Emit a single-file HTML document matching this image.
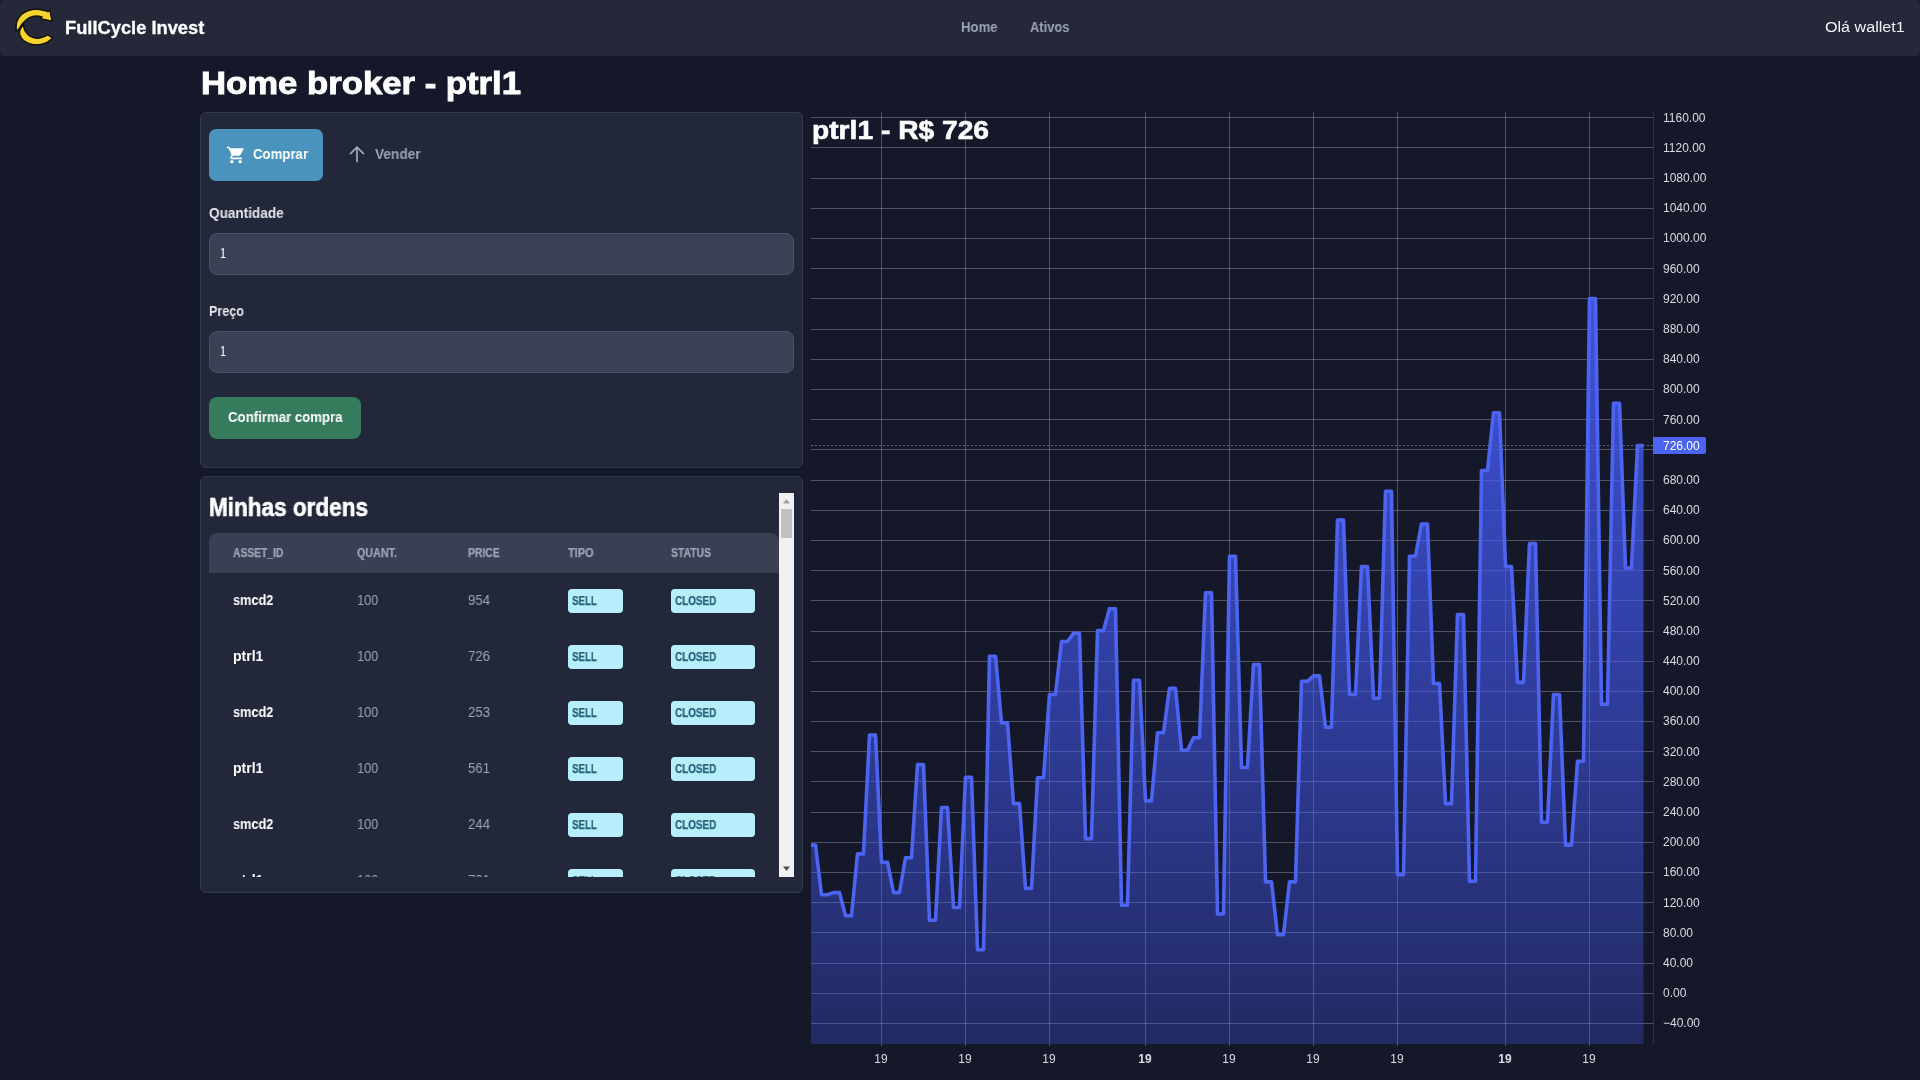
<!DOCTYPE html>
<html lang="pt-BR"><head><meta charset="utf-8"><title>Home broker - ptrl1</title>
<style>
html,body{margin:0;padding:0}body{width:1920px;height:1080px;overflow:hidden;position:relative;background:#151829;font-family:"Liberation Sans", sans-serif;color:#fff}
*{box-sizing:border-box}h1,h2,p,label,th,td,a,button{margin:0;padding:0;font-weight:inherit;font-size:inherit;font-family:inherit;text-decoration:none;border:0;background:none;cursor:default}
.abs{position:absolute}nav a,nav span,main h1,main h2,main span,main label,main button{will-change:transform}
.card{position:absolute;background:#22273a;border:1px solid #343a4e;border-radius:6px}
.inp{position:absolute;left:209px;width:585px;height:42px;background:#3b4055;border:1px solid #4b5166;border-radius:8px}
.badge{position:absolute;height:24px;border-radius:4px;background:#b7eefc}
</style></head><body>
<nav class="abs" style="left:0;top:0;width:1920px;height:56px;background:#242839;border-radius:4px">
<svg class="abs" style="left:15px;top:8px" width="39" height="39" viewBox="-1 -1 39 39"><g fill="#f7d42c" stroke="#17140a" stroke-width="1.5" stroke-linejoin="round"><path d="M7.30 15.00 C6.68 16.12 4.12 19.70 3.60 21.70 C3.08 23.70 3.35 25.23 4.20 27.00 C5.05 28.77 6.70 30.90 8.70 32.30 C10.70 33.70 13.83 34.83 16.20 35.40 C18.57 35.97 20.53 35.98 22.90 35.70 C25.27 35.42 28.10 34.78 30.40 33.70 C32.70 32.62 35.65 29.95 36.70 29.20 L31.8 25.7 C31.05 26.07 29.15 27.32 27.30 27.90 C25.45 28.48 22.92 29.35 20.70 29.20 C18.48 29.05 15.85 28.10 14.00 27.00 C12.15 25.90 10.63 24.08 9.60 22.60 C8.57 21.12 8.18 19.37 7.80 18.10 C7.42 16.83 7.38 15.52 7.30 15.00 Z"/><path d="M0.10 22.20 C0.20 20.63 -0.13 15.55 0.70 12.80 C1.53 10.05 3.25 7.55 5.10 5.70 C6.95 3.85 9.20 2.60 11.80 1.70 C14.40 0.80 17.73 0.30 20.70 0.30 C23.67 0.30 27.75 1.32 29.60 1.70 C31.45 2.08 31.43 2.45 31.80 2.60 L33.8 0.8 L36.2 12.3 L24.7 9.7 L26 7.9 C25.12 7.75 22.70 6.93 20.70 7.00 C18.70 7.07 16.23 7.18 14.00 8.30 C11.77 9.42 9.15 11.77 7.30 13.70 C5.45 15.63 4.10 18.48 2.90 19.90 C1.70 21.32 0.57 21.82 0.10 22.20 Z"/></g></svg>
<a style="position:absolute;left:65.04px;top:20.13px;font-size:17.8px;line-height:1;white-space:pre;font-weight:700;color:#fff;transform:scaleX(1.0290);transform-origin:0 50%;-webkit-text-stroke:0.3px #fff;">FullCycle Invest</a>
<a style="position:absolute;left:961.18px;top:20.15px;font-size:14px;line-height:1;white-space:pre;font-weight:700;color:#9da3b4;transform:scaleX(0.9403);transform-origin:0 50%;">Home</a>
<a style="position:absolute;left:1029.68px;top:20.15px;font-size:14px;line-height:1;white-space:pre;font-weight:700;color:#9da3b4;transform:scaleX(0.9200);transform-origin:0 50%;">Ativos</a>
<span style="position:absolute;left:1824.60px;top:19.38px;font-size:15.5px;line-height:1;white-space:pre;font-weight:400;color:#f1f2f6;transform:scaleX(1.0395);transform-origin:0 50%;">Olá wallet1</span>
</nav>
<main>
<h1 style="position:absolute;left:200.64px;top:68.25px;font-size:31.6px;line-height:1;white-space:pre;font-weight:700;color:#fff;transform:scaleX(1.0982);transform-origin:0 50%;-webkit-text-stroke:0.9px #fff;">Home broker - ptrl1</h1>
<section><div class="card" style="left:200px;top:112px;width:603px;height:356px"></div><form>
<div class="abs" style="left:209px;top:129px;width:114px;height:52px;border-radius:7px;background:#4a93bd"></div>
<svg class="abs" style="left:225.800px;top:144.700px" width="20" height="20" viewBox="0 0 24 24" fill="#fff"><path d="M7 18c-1.1 0-1.99.9-1.99 2S5.900 22 7 22s2-.9 2-2-.9-2-2-2zM1 2v2h2l3.600 7.590-1.350 2.450c-.16.280-.25.610-.25.960 0 1.100.9 2 2 2h12v-2H7.420c-.14 0-.25-.11-.25-.25l.030-.12.900-1.630h7.450c.75 0 1.410-.41 1.750-1.030l3.580-6.490A1.003 1.003 0 0 0 20 4H5.210l-.94-2H1zm16 16c-1.100 0-1.990.9-1.990 2s.89 2 1.990 2 2-.9 2-2-.9-2-2-2z"/></svg>
<button style="position:absolute;left:252.67px;top:147.35px;font-size:14px;line-height:1;white-space:pre;font-weight:700;color:#fff;transform:scaleX(0.9422);transform-origin:0 50%;">Comprar</button>
<svg class="abs" style="left:347.100px;top:144.100px" width="20" height="20" viewBox="0 0 20 20" fill="none" stroke="#a4a9ba" stroke-width="1.7" stroke-linecap="round" stroke-linejoin="round"><path d="M10 17.500V3.200M3.600 9.600L10 3.200l6.400 6.400"/></svg>
<button style="position:absolute;left:374.96px;top:147.35px;font-size:14px;line-height:1;white-space:pre;font-weight:700;color:#9da3b4;transform:scaleX(0.9765);transform-origin:0 50%;">Vender</button>
<label style="position:absolute;left:209.16px;top:206.15px;font-size:14px;line-height:1;white-space:pre;font-weight:700;color:#e4e6ec;transform:scaleX(0.9687);transform-origin:0 50%;">Quantidade</label>
<div class="inp" style="top:233px"></div>
<span style="position:absolute;left:220.25px;top:246.45px;font-size:14px;line-height:1;white-space:pre;font-weight:400;color:#fff;transform:scaleX(0.7624);transform-origin:0 50%;">1</span>
<label style="position:absolute;left:209.19px;top:304.15px;font-size:14px;line-height:1;white-space:pre;font-weight:700;color:#e4e6ec;transform:scaleX(0.9007);transform-origin:0 50%;">Preço</label>
<div class="inp" style="top:331px"></div>
<span style="position:absolute;left:220.25px;top:344.45px;font-size:14px;line-height:1;white-space:pre;font-weight:400;color:#fff;transform:scaleX(0.7624);transform-origin:0 50%;">1</span>
<div class="abs" style="left:209px;top:397px;width:152px;height:42px;border-radius:8px;background:#367b5c"></div>
<button style="position:absolute;left:227.67px;top:410.45px;font-size:14px;line-height:1;white-space:pre;font-weight:700;color:#fff;transform:scaleX(0.9442);transform-origin:0 50%;">Confirmar compra</button>
</form></section>
<section><div class="card" style="left:200px;top:476px;width:603px;height:417px"></div>
<h2 style="position:absolute;left:209.04px;top:494.84px;font-size:25px;line-height:1;white-space:pre;font-weight:700;color:#fff;transform:scaleX(0.9013);transform-origin:0 50%;-webkit-text-stroke:0.6px #fff;">Minhas ordens</h2>
<div class="abs" style="left:209px;top:533px;width:570px;height:40px;background:#3a3f54;border-radius:8px 8px 0 0"></div>
<span style="position:absolute;left:232.75px;top:546.84px;font-size:12px;line-height:1;white-space:pre;font-weight:700;color:#9da3b4;transform:scaleX(0.8564);transform-origin:0 50%;-webkit-text-stroke:0.25px #9da3b4;">ASSET_ID</span>
<span style="position:absolute;left:357.23px;top:546.84px;font-size:12px;line-height:1;white-space:pre;font-weight:700;color:#9da3b4;transform:scaleX(0.8949);transform-origin:0 50%;-webkit-text-stroke:0.25px #9da3b4;">QUANT.</span>
<span style="position:absolute;left:467.74px;top:546.84px;font-size:12px;line-height:1;white-space:pre;font-weight:700;color:#9da3b4;transform:scaleX(0.8629);transform-origin:0 50%;-webkit-text-stroke:0.25px #9da3b4;">PRICE</span>
<span style="position:absolute;left:568.03px;top:546.84px;font-size:12px;line-height:1;white-space:pre;font-weight:700;color:#9da3b4;transform:scaleX(0.9096);transform-origin:0 50%;-webkit-text-stroke:0.25px #9da3b4;">TIPO</span>
<span style="position:absolute;left:671.04px;top:546.84px;font-size:12px;line-height:1;white-space:pre;font-weight:700;color:#9da3b4;transform:scaleX(0.8646);transform-origin:0 50%;-webkit-text-stroke:0.25px #9da3b4;">STATUS</span>
<div class="abs" style="left:0;top:0;width:1920px;height:877px;overflow:hidden;pointer-events:none">
<span style="position:absolute;left:232.69px;top:592.85px;font-size:14px;line-height:1;white-space:pre;font-weight:700;color:#fff;transform:scaleX(0.9100);transform-origin:0 50%;">smcd2</span>
<span style="position:absolute;left:357.19px;top:592.85px;font-size:14px;line-height:1;white-space:pre;font-weight:400;color:#9da3b4;transform:scaleX(0.9144);transform-origin:0 50%;">100</span>
<span style="position:absolute;left:467.68px;top:592.85px;font-size:14px;line-height:1;white-space:pre;font-weight:400;color:#9da3b4;transform:scaleX(0.9452);transform-origin:0 50%;">954</span>
<div class="badge" style="left:568px;top:589.0px;width:55px"></div>
<span style="position:absolute;left:572.26px;top:594.54px;font-size:12px;line-height:1;white-space:pre;font-weight:700;color:#27627a;transform:scaleX(0.8128);transform-origin:0 50%;-webkit-text-stroke:0.25px #27627a;">SELL</span>
<div class="badge" style="left:671px;top:589.0px;width:84px"></div>
<span style="position:absolute;left:675.05px;top:594.54px;font-size:12px;line-height:1;white-space:pre;font-weight:700;color:#27627a;transform:scaleX(0.8266);transform-origin:0 50%;-webkit-text-stroke:0.25px #27627a;">CLOSED</span>
<span style="position:absolute;left:232.66px;top:648.85px;font-size:14px;line-height:1;white-space:pre;font-weight:700;color:#fff;transform:scaleX(0.9924);transform-origin:0 50%;">ptrl1</span>
<span style="position:absolute;left:357.19px;top:648.85px;font-size:14px;line-height:1;white-space:pre;font-weight:400;color:#9da3b4;transform:scaleX(0.9144);transform-origin:0 50%;">100</span>
<span style="position:absolute;left:467.68px;top:648.85px;font-size:14px;line-height:1;white-space:pre;font-weight:400;color:#9da3b4;transform:scaleX(0.9452);transform-origin:0 50%;">726</span>
<div class="badge" style="left:568px;top:645.0px;width:55px"></div>
<span style="position:absolute;left:572.26px;top:650.54px;font-size:12px;line-height:1;white-space:pre;font-weight:700;color:#27627a;transform:scaleX(0.8128);transform-origin:0 50%;-webkit-text-stroke:0.25px #27627a;">SELL</span>
<div class="badge" style="left:671px;top:645.0px;width:84px"></div>
<span style="position:absolute;left:675.05px;top:650.54px;font-size:12px;line-height:1;white-space:pre;font-weight:700;color:#27627a;transform:scaleX(0.8266);transform-origin:0 50%;-webkit-text-stroke:0.25px #27627a;">CLOSED</span>
<span style="position:absolute;left:232.69px;top:704.85px;font-size:14px;line-height:1;white-space:pre;font-weight:700;color:#fff;transform:scaleX(0.9100);transform-origin:0 50%;">smcd2</span>
<span style="position:absolute;left:357.19px;top:704.85px;font-size:14px;line-height:1;white-space:pre;font-weight:400;color:#9da3b4;transform:scaleX(0.9144);transform-origin:0 50%;">100</span>
<span style="position:absolute;left:467.68px;top:704.85px;font-size:14px;line-height:1;white-space:pre;font-weight:400;color:#9da3b4;transform:scaleX(0.9452);transform-origin:0 50%;">253</span>
<div class="badge" style="left:568px;top:701.0px;width:55px"></div>
<span style="position:absolute;left:572.26px;top:706.54px;font-size:12px;line-height:1;white-space:pre;font-weight:700;color:#27627a;transform:scaleX(0.8128);transform-origin:0 50%;-webkit-text-stroke:0.25px #27627a;">SELL</span>
<div class="badge" style="left:671px;top:701.0px;width:84px"></div>
<span style="position:absolute;left:675.05px;top:706.54px;font-size:12px;line-height:1;white-space:pre;font-weight:700;color:#27627a;transform:scaleX(0.8266);transform-origin:0 50%;-webkit-text-stroke:0.25px #27627a;">CLOSED</span>
<span style="position:absolute;left:232.66px;top:760.85px;font-size:14px;line-height:1;white-space:pre;font-weight:700;color:#fff;transform:scaleX(0.9924);transform-origin:0 50%;">ptrl1</span>
<span style="position:absolute;left:357.19px;top:760.85px;font-size:14px;line-height:1;white-space:pre;font-weight:400;color:#9da3b4;transform:scaleX(0.9144);transform-origin:0 50%;">100</span>
<span style="position:absolute;left:467.68px;top:760.85px;font-size:14px;line-height:1;white-space:pre;font-weight:400;color:#9da3b4;transform:scaleX(0.9452);transform-origin:0 50%;">561</span>
<div class="badge" style="left:568px;top:757.0px;width:55px"></div>
<span style="position:absolute;left:572.26px;top:762.54px;font-size:12px;line-height:1;white-space:pre;font-weight:700;color:#27627a;transform:scaleX(0.8128);transform-origin:0 50%;-webkit-text-stroke:0.25px #27627a;">SELL</span>
<div class="badge" style="left:671px;top:757.0px;width:84px"></div>
<span style="position:absolute;left:675.05px;top:762.54px;font-size:12px;line-height:1;white-space:pre;font-weight:700;color:#27627a;transform:scaleX(0.8266);transform-origin:0 50%;-webkit-text-stroke:0.25px #27627a;">CLOSED</span>
<span style="position:absolute;left:232.69px;top:816.85px;font-size:14px;line-height:1;white-space:pre;font-weight:700;color:#fff;transform:scaleX(0.9100);transform-origin:0 50%;">smcd2</span>
<span style="position:absolute;left:357.19px;top:816.85px;font-size:14px;line-height:1;white-space:pre;font-weight:400;color:#9da3b4;transform:scaleX(0.9144);transform-origin:0 50%;">100</span>
<span style="position:absolute;left:467.68px;top:816.85px;font-size:14px;line-height:1;white-space:pre;font-weight:400;color:#9da3b4;transform:scaleX(0.9452);transform-origin:0 50%;">244</span>
<div class="badge" style="left:568px;top:813.0px;width:55px"></div>
<span style="position:absolute;left:572.26px;top:818.54px;font-size:12px;line-height:1;white-space:pre;font-weight:700;color:#27627a;transform:scaleX(0.8128);transform-origin:0 50%;-webkit-text-stroke:0.25px #27627a;">SELL</span>
<div class="badge" style="left:671px;top:813.0px;width:84px"></div>
<span style="position:absolute;left:675.05px;top:818.54px;font-size:12px;line-height:1;white-space:pre;font-weight:700;color:#27627a;transform:scaleX(0.8266);transform-origin:0 50%;-webkit-text-stroke:0.25px #27627a;">CLOSED</span>
<span style="position:absolute;left:232.66px;top:872.85px;font-size:14px;line-height:1;white-space:pre;font-weight:700;color:#fff;transform:scaleX(0.9924);transform-origin:0 50%;">ptrl1</span>
<span style="position:absolute;left:357.19px;top:872.85px;font-size:14px;line-height:1;white-space:pre;font-weight:400;color:#9da3b4;transform:scaleX(0.9144);transform-origin:0 50%;">100</span>
<span style="position:absolute;left:467.68px;top:872.85px;font-size:14px;line-height:1;white-space:pre;font-weight:400;color:#9da3b4;transform:scaleX(0.9452);transform-origin:0 50%;">701</span>
<div class="badge" style="left:568px;top:869.0px;width:55px"></div>
<span style="position:absolute;left:572.26px;top:874.54px;font-size:12px;line-height:1;white-space:pre;font-weight:700;color:#27627a;transform:scaleX(0.8128);transform-origin:0 50%;-webkit-text-stroke:0.25px #27627a;">SELL</span>
<div class="badge" style="left:671px;top:869.0px;width:84px"></div>
<span style="position:absolute;left:675.05px;top:874.54px;font-size:12px;line-height:1;white-space:pre;font-weight:700;color:#27627a;transform:scaleX(0.8266);transform-origin:0 50%;-webkit-text-stroke:0.25px #27627a;">CLOSED</span>
</div>
<div class="abs" style="left:779px;top:493px;width:15px;height:384px;background:#f1f1f1"></div>
<div class="abs" style="left:781px;top:508.500px;width:11px;height:29px;background:#c1c1c1"></div>
<svg class="abs" style="left:779px;top:493px" width="15" height="384" viewBox="0 0 15 384"><path d="M4 10.500 L7.500 6 L11 10.500 Z" fill="#a3a3a3"/><path d="M4 373.500 L7.500 378 L11 373.500 Z" fill="#505050"/></svg>
</section>
<section>
<svg width="1920" height="1080" viewBox="0 0 1920 1080" style="position:absolute;left:0;top:0;will-change:transform" font-family='Liberation Sans, sans-serif'>
<defs><linearGradient id="ag" gradientUnits="userSpaceOnUse" x1="0" y1="112" x2="0" y2="1044"><stop offset="0" stop-color="#465cfa" stop-opacity="1"/><stop offset="1" stop-color="#465cfa" stop-opacity="0.28"/></linearGradient><clipPath id="pc"><rect x="811" y="112" width="842" height="932"/></clipPath></defs>
<path d="M881.5 112 V1046 M965.5 112 V1046 M1049.5 112 V1046 M1145.5 112 V1046 M1229.5 112 V1046 M1313.5 112 V1046 M1397.5 112 V1046 M1505.5 112 V1046 M1589.5 112 V1046" stroke="rgba(209,212,220,0.31)" stroke-width="1" fill="none"/>
<path d="M811 1023.5 H1653 M811 993.5 H1653 M811 963.5 H1653 M811 932.5 H1653 M811 902.5 H1653 M811 872.5 H1653 M811 842.5 H1653 M811 812.5 H1653 M811 781.5 H1653 M811 751.5 H1653 M811 721.5 H1653 M811 691.5 H1653 M811 661.5 H1653 M811 631.5 H1653 M811 600.5 H1653 M811 570.5 H1653 M811 540.5 H1653 M811 510.5 H1653 M811 480.5 H1653 M811 449.5 H1653 M811 419.5 H1653 M811 389.5 H1653 M811 359.5 H1653 M811 329.5 H1653 M811 298.5 H1653 M811 268.5 H1653 M811 238.5 H1653 M811 208.5 H1653 M811 178.5 H1653 M811 147.5 H1653 M811 117.5 H1653" stroke="rgba(209,212,220,0.31)" stroke-width="1" fill="none"/>
<g clip-path="url(#pc)"><path d="M809.5 845.1 L815.5 845.1 L821.5 894.8 L827.5 894.8 L833.5 892.6 L839.5 892.6 L845.5 915.8 L851.5 915.8 L857.5 853.9 L863.5 853.9 L869.5 735.0 L875.5 735.0 L881.5 862.2 L887.5 862.2 L893.5 892.6 L899.5 892.6 L905.5 857.8 L911.5 857.8 L917.5 764.6 L923.5 764.6 L929.5 920.2 L935.5 920.2 L941.5 807.5 L947.5 807.5 L953.5 907.5 L959.5 907.5 L965.5 777.3 L971.5 777.3 L977.5 949.7 L983.5 949.7 L989.5 656.2 L995.5 656.2 L1001.5 722.9 L1007.5 722.9 L1013.5 803.6 L1019.5 803.6 L1025.5 888.4 L1031.5 888.4 L1037.5 777.8 L1043.5 777.8 L1049.5 694.5 L1055.5 694.5 L1061.5 641.5 L1067.5 641.5 L1073.5 633.2 L1079.5 633.2 L1085.5 838.6 L1091.5 838.6 L1097.5 630.6 L1103.5 630.6 L1109.5 608.7 L1115.5 608.7 L1121.5 905.3 L1127.5 905.3 L1133.5 680.2 L1139.5 680.2 L1145.5 800.9 L1151.5 800.9 L1157.5 732.7 L1163.5 732.7 L1169.5 688.3 L1175.5 688.3 L1181.5 750.2 L1187.5 750.2 L1193.5 737.8 L1199.5 737.8 L1205.5 592.7 L1211.5 592.7 L1217.5 914.0 L1223.5 914.0 L1229.5 556.2 L1235.5 556.2 L1241.5 767.5 L1247.5 767.5 L1253.5 664.5 L1259.5 664.5 L1265.5 881.9 L1271.5 881.9 L1277.5 934.8 L1283.5 934.8 L1289.5 881.9 L1295.5 881.9 L1301.5 681.3 L1307.5 681.3 L1313.5 675.9 L1319.5 675.9 L1325.5 727.3 L1331.5 727.3 L1337.5 520.1 L1343.5 520.1 L1349.5 694.5 L1355.5 694.5 L1361.5 566.5 L1367.5 566.5 L1373.5 698.2 L1379.5 698.2 L1385.5 491.3 L1391.5 491.3 L1397.5 874.7 L1403.5 874.7 L1409.5 556.2 L1415.5 556.2 L1421.5 524.1 L1427.5 524.1 L1433.5 683.5 L1439.5 683.5 L1445.5 803.6 L1451.5 803.6 L1457.5 614.6 L1463.5 614.6 L1469.5 881.2 L1475.5 881.2 L1481.5 470.5 L1487.5 470.5 L1493.5 412.9 L1499.5 412.9 L1505.5 566.5 L1511.5 566.5 L1517.5 682.4 L1523.5 682.4 L1529.5 543.5 L1535.5 543.5 L1541.5 822.2 L1547.5 822.2 L1553.5 694.5 L1559.5 694.5 L1565.5 845.1 L1571.5 845.1 L1577.5 761.2 L1583.5 761.2 L1589.5 298.5 L1595.5 298.5 L1601.5 704.3 L1607.5 704.3 L1613.5 403.3 L1619.5 403.3 L1625.5 568.0 L1631.5 568.0 L1637.5 445.5 L1643.5 445.5 L1643.5 1044 L809.5 1044 Z" fill="url(#ag)"/>
<path d="M809.5 845.1 L815.5 845.1 L821.5 894.8 L827.5 894.8 L833.5 892.6 L839.5 892.6 L845.5 915.8 L851.5 915.8 L857.5 853.9 L863.5 853.9 L869.5 735.0 L875.5 735.0 L881.5 862.2 L887.5 862.2 L893.5 892.6 L899.5 892.6 L905.5 857.8 L911.5 857.8 L917.5 764.6 L923.5 764.6 L929.5 920.2 L935.5 920.2 L941.5 807.5 L947.5 807.5 L953.5 907.5 L959.5 907.5 L965.5 777.3 L971.5 777.3 L977.5 949.7 L983.5 949.7 L989.5 656.2 L995.5 656.2 L1001.5 722.9 L1007.5 722.9 L1013.5 803.6 L1019.5 803.6 L1025.5 888.4 L1031.5 888.4 L1037.5 777.8 L1043.5 777.8 L1049.5 694.5 L1055.5 694.5 L1061.5 641.5 L1067.5 641.5 L1073.5 633.2 L1079.5 633.2 L1085.5 838.6 L1091.5 838.6 L1097.5 630.6 L1103.5 630.6 L1109.5 608.7 L1115.5 608.7 L1121.5 905.3 L1127.5 905.3 L1133.5 680.2 L1139.5 680.2 L1145.5 800.9 L1151.5 800.9 L1157.5 732.7 L1163.5 732.7 L1169.5 688.3 L1175.5 688.3 L1181.5 750.2 L1187.5 750.2 L1193.5 737.8 L1199.5 737.8 L1205.5 592.7 L1211.5 592.7 L1217.5 914.0 L1223.5 914.0 L1229.5 556.2 L1235.5 556.2 L1241.5 767.5 L1247.5 767.5 L1253.5 664.5 L1259.5 664.5 L1265.5 881.9 L1271.5 881.9 L1277.5 934.8 L1283.5 934.8 L1289.5 881.9 L1295.5 881.9 L1301.5 681.3 L1307.5 681.3 L1313.5 675.9 L1319.5 675.9 L1325.5 727.3 L1331.5 727.3 L1337.5 520.1 L1343.5 520.1 L1349.5 694.5 L1355.5 694.5 L1361.5 566.5 L1367.5 566.5 L1373.5 698.2 L1379.5 698.2 L1385.5 491.3 L1391.5 491.3 L1397.5 874.7 L1403.5 874.7 L1409.5 556.2 L1415.5 556.2 L1421.5 524.1 L1427.5 524.1 L1433.5 683.5 L1439.5 683.5 L1445.5 803.6 L1451.5 803.6 L1457.5 614.6 L1463.5 614.6 L1469.5 881.2 L1475.5 881.2 L1481.5 470.5 L1487.5 470.5 L1493.5 412.9 L1499.5 412.9 L1505.5 566.5 L1511.5 566.5 L1517.5 682.4 L1523.5 682.4 L1529.5 543.5 L1535.5 543.5 L1541.5 822.2 L1547.5 822.2 L1553.5 694.5 L1559.5 694.5 L1565.5 845.1 L1571.5 845.1 L1577.5 761.2 L1583.5 761.2 L1589.5 298.5 L1595.5 298.5 L1601.5 704.3 L1607.5 704.3 L1613.5 403.3 L1619.5 403.3 L1625.5 568.0 L1631.5 568.0 L1637.5 445.5 L1643.5 445.5" fill="none" stroke="#4d64f0" stroke-width="3.6" stroke-linejoin="round" stroke-linecap="butt"/></g>
<path d="M811 445.5 H1653" stroke="#5d64a2" stroke-width="1" stroke-dasharray="2 2" fill="none"/>
<path d="M1653.5 112 V1044" stroke="#2c3044" stroke-width="1" fill="none"/>
<text x="1663" y="1027.3" font-size="12" fill="#d9dbe2">−40.00</text>
<text x="1663" y="997.1" font-size="12" fill="#d9dbe2">0.00</text>
<text x="1663" y="966.9" font-size="12" fill="#d9dbe2">40.00</text>
<text x="1663" y="936.8" font-size="12" fill="#d9dbe2">80.00</text>
<text x="1663" y="906.6" font-size="12" fill="#d9dbe2">120.00</text>
<text x="1663" y="876.4" font-size="12" fill="#d9dbe2">160.00</text>
<text x="1663" y="846.2" font-size="12" fill="#d9dbe2">200.00</text>
<text x="1663" y="816.0" font-size="12" fill="#d9dbe2">240.00</text>
<text x="1663" y="785.8" font-size="12" fill="#d9dbe2">280.00</text>
<text x="1663" y="755.6" font-size="12" fill="#d9dbe2">320.00</text>
<text x="1663" y="725.4" font-size="12" fill="#d9dbe2">360.00</text>
<text x="1663" y="695.2" font-size="12" fill="#d9dbe2">400.00</text>
<text x="1663" y="665.0" font-size="12" fill="#d9dbe2">440.00</text>
<text x="1663" y="634.8" font-size="12" fill="#d9dbe2">480.00</text>
<text x="1663" y="604.6" font-size="12" fill="#d9dbe2">520.00</text>
<text x="1663" y="574.5" font-size="12" fill="#d9dbe2">560.00</text>
<text x="1663" y="544.3" font-size="12" fill="#d9dbe2">600.00</text>
<text x="1663" y="514.1" font-size="12" fill="#d9dbe2">640.00</text>
<text x="1663" y="483.9" font-size="12" fill="#d9dbe2">680.00</text>
<text x="1663" y="423.5" font-size="12" fill="#d9dbe2">760.00</text>
<text x="1663" y="393.3" font-size="12" fill="#d9dbe2">800.00</text>
<text x="1663" y="363.1" font-size="12" fill="#d9dbe2">840.00</text>
<text x="1663" y="332.9" font-size="12" fill="#d9dbe2">880.00</text>
<text x="1663" y="302.7" font-size="12" fill="#d9dbe2">920.00</text>
<text x="1663" y="272.5" font-size="12" fill="#d9dbe2">960.00</text>
<text x="1663" y="242.3" font-size="12" fill="#d9dbe2">1000.00</text>
<text x="1663" y="212.1" font-size="12" fill="#d9dbe2">1040.00</text>
<text x="1663" y="182.0" font-size="12" fill="#d9dbe2">1080.00</text>
<text x="1663" y="151.8" font-size="12" fill="#d9dbe2">1120.00</text>
<text x="1663" y="121.6" font-size="12" fill="#d9dbe2">1160.00</text>
<path d="M1653 437 H1704 a2 2 0 0 1 2 2 V452 a2 2 0 0 1 -2 2 H1653 Z" fill="#4d64f0"/>
<text x="1663" y="449.8" font-size="12" fill="#fff">726.00</text>
<text x="881.0" y="1062.5" font-size="12" text-anchor="middle" fill="#d9dbe2">19</text>
<text x="965.0" y="1062.5" font-size="12" text-anchor="middle" fill="#d9dbe2">19</text>
<text x="1049.0" y="1062.5" font-size="12" text-anchor="middle" fill="#d9dbe2">19</text>
<text x="1145.0" y="1062.5" font-size="12" text-anchor="middle" fill="#d9dbe2" font-weight="700">19</text>
<text x="1229.0" y="1062.5" font-size="12" text-anchor="middle" fill="#d9dbe2">19</text>
<text x="1313.0" y="1062.5" font-size="12" text-anchor="middle" fill="#d9dbe2">19</text>
<text x="1397.0" y="1062.5" font-size="12" text-anchor="middle" fill="#d9dbe2">19</text>
<text x="1505.0" y="1062.5" font-size="12" text-anchor="middle" fill="#d9dbe2" font-weight="700">19</text>
<text x="1589.0" y="1062.5" font-size="12" text-anchor="middle" fill="#d9dbe2">19</text>
</svg>
<h2 style="position:absolute;left:811.60px;top:118.03px;font-size:25.6px;line-height:1;white-space:pre;font-weight:700;color:#fff;transform:scaleX(1.1015);transform-origin:0 50%;-webkit-text-stroke:0.6px #fff;">ptrl1 - R$ 726</h2>
</section>
</main></body></html>
